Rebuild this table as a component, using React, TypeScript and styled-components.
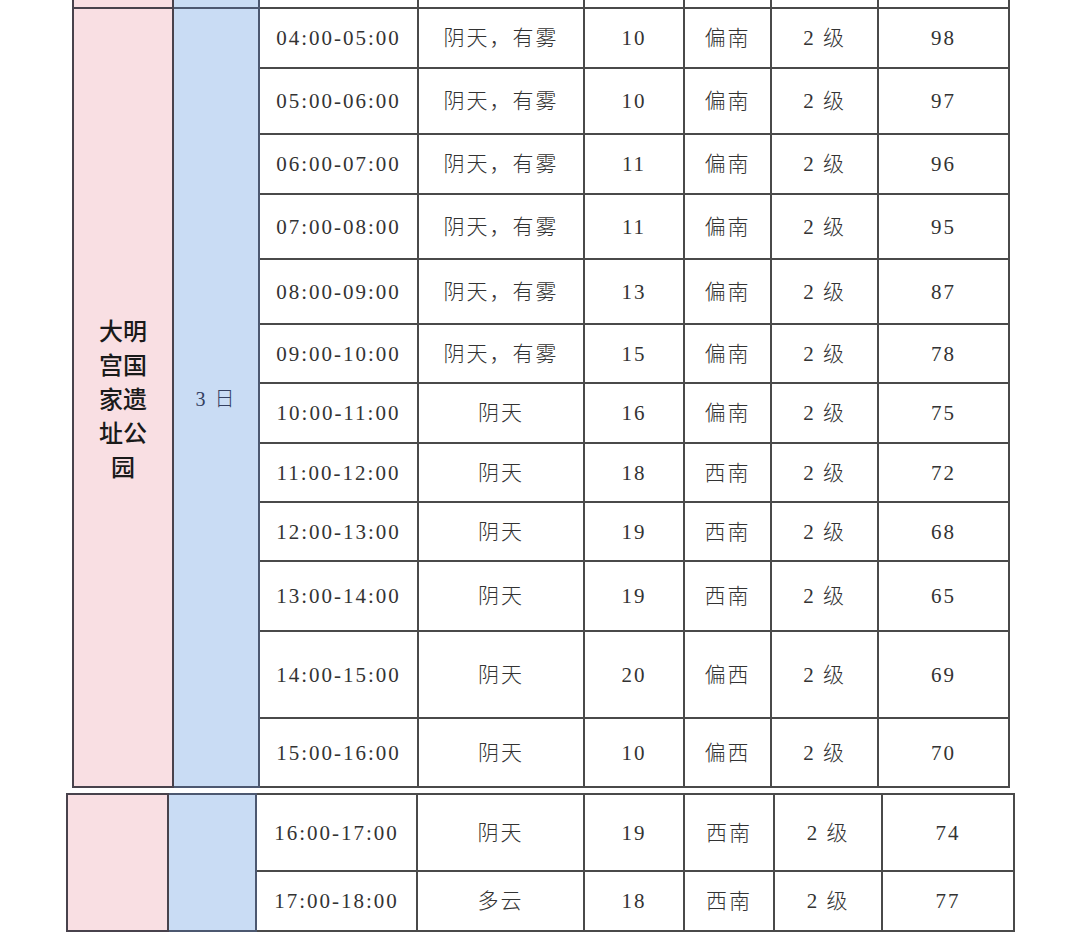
import React from "react";
import styled, { createGlobalStyle } from "styled-components";

const GlobalStyle = createGlobalStyle`
  html, body {
    margin: 0;
    padding: 0;
    background: #ffffff;
  }
  body {
    font-family: "Liberation Serif", "Noto Sans CJK SC", serif;
    color: #333;
  }
`;

const Page = styled.div`
  width: 1080px;
  height: 935px;
  overflow: hidden;
  background: #fff;
  display: flex;
  flex-direction: column;
  gap: 5px;
`;

const Table = styled.table<{ left: number; width: number; top?: number }>`
  border-collapse: collapse;
  table-layout: fixed;
  margin-left: ${({ left }) => left}px;
  margin-top: ${({ top }) => top ?? 0}px;
  width: ${({ width }) => width}px;
  border: 2px solid #3a3a3a;
`;

const Row = styled.tr<{ h: number }>`
  height: ${({ h }) => h}px;
`;

const Cell = styled.td`
  border: 2px solid #4a4a4a;
  padding: 0;
  text-align: center;
  vertical-align: middle;
  font-size: 21px;
  line-height: 24px;
  letter-spacing: 2px;
  color: #333;
  font-family: "Liberation Serif", "Noto Sans CJK SC", serif;
  font-weight: 300;
  white-space: nowrap;
`;

const PlaceCell = styled.td`
  border: 2px solid #48424c;
  padding: 0;
  background: #f9dfe3;
  text-align: center;
  vertical-align: middle;
`;

const DayCell = styled.td`
  border: 2px solid #4c5870;
  padding: 0;
  background: #c9dcf4;
  text-align: center;
  vertical-align: middle;
  font-size: 20px;
  letter-spacing: 2px;
  color: #344060;
  font-family: "Liberation Serif", "Noto Sans CJK SC", serif;
  font-weight: 300;
`;

const PlaceName = styled.div`
  width: 52px;
  margin: 0 auto;
  font-family: "Noto Sans CJK SC", sans-serif;
  font-size: 24px;
  line-height: 34px;
  font-weight: 500;
  color: #1a1a1a;
  word-break: break-all;
`;

type Hour = [string, string, string, string, string, string, number];

const first: Hour[] = [
  ["04:00-05:00", "阴天，有雾", "10", "偏南", "2 级", "98", 60],
  ["05:00-06:00", "阴天，有雾", "10", "偏南", "2 级", "97", 66],
  ["06:00-07:00", "阴天，有雾", "11", "偏南", "2 级", "96", 60],
  ["07:00-08:00", "阴天，有雾", "11", "偏南", "2 级", "95", 65],
  ["08:00-09:00", "阴天，有雾", "13", "偏南", "2 级", "87", 65],
  ["09:00-10:00", "阴天，有雾", "15", "偏南", "2 级", "78", 59],
  ["10:00-11:00", "阴天", "16", "偏南", "2 级", "75", 60],
  ["11:00-12:00", "阴天", "18", "西南", "2 级", "72", 59],
  ["12:00-13:00", "阴天", "19", "西南", "2 级", "68", 59],
  ["13:00-14:00", "阴天", "19", "西南", "2 级", "65", 70],
  ["14:00-15:00", "阴天", "20", "偏西", "2 级", "69", 87],
  ["15:00-16:00", "阴天", "10", "偏西", "2 级", "70", 69],
];

const second: Hour[] = [
  ["16:00-17:00", "阴天", "19", "西南", "2 级", "74", 77],
  ["17:00-18:00", "多云", "18", "西南", "2 级", "77", 60],
];

const DataCells = ({ hour }: { hour: Hour }) => (
  <>
    {hour.slice(0, 6).map((v, i) => (
      <Cell key={i}>{v}</Cell>
    ))}
  </>
);

const Cols = ({ widths }: { widths: number[] }) => (
  <colgroup>
    {widths.map((w, i) => (
      <col key={i} style={{ width: w }} />
    ))}
  </colgroup>
);

export default function App() {
  return (
    <Page>
      <GlobalStyle />
      <Table left={72} width={936} top={-4}>
        <Cols widths={[100, 86, 159, 166, 100, 87, 107, 131]} />
        <tbody>
          <Row h={11}>
            <PlaceCell />
            <DayCell />
            <Cell />
            <Cell />
            <Cell />
            <Cell />
            <Cell />
            <Cell />
          </Row>
          {first.map((hour, i) => (
            <Row key={hour[0]} h={hour[6]}>
              {i === 0 && (
                <>
                  <PlaceCell rowSpan={first.length}>
                    <PlaceName>大明宫国家遗址公园</PlaceName>
                  </PlaceCell>
                  <DayCell rowSpan={first.length}>3 日</DayCell>
                </>
              )}
              <DataCells hour={hour} />
            </Row>
          ))}
        </tbody>
      </Table>
      <Table left={66} width={947}>
        <Cols widths={[101, 88, 161, 167, 100, 90, 108, 132]} />
        <tbody>
          {second.map((hour, i) => (
            <Row key={hour[0]} h={hour[6]}>
              {i === 0 && (
                <>
                  <PlaceCell rowSpan={second.length} />
                  <DayCell rowSpan={second.length} />
                </>
              )}
              <DataCells hour={hour} />
            </Row>
          ))}
        </tbody>
      </Table>
    </Page>
  );
}
